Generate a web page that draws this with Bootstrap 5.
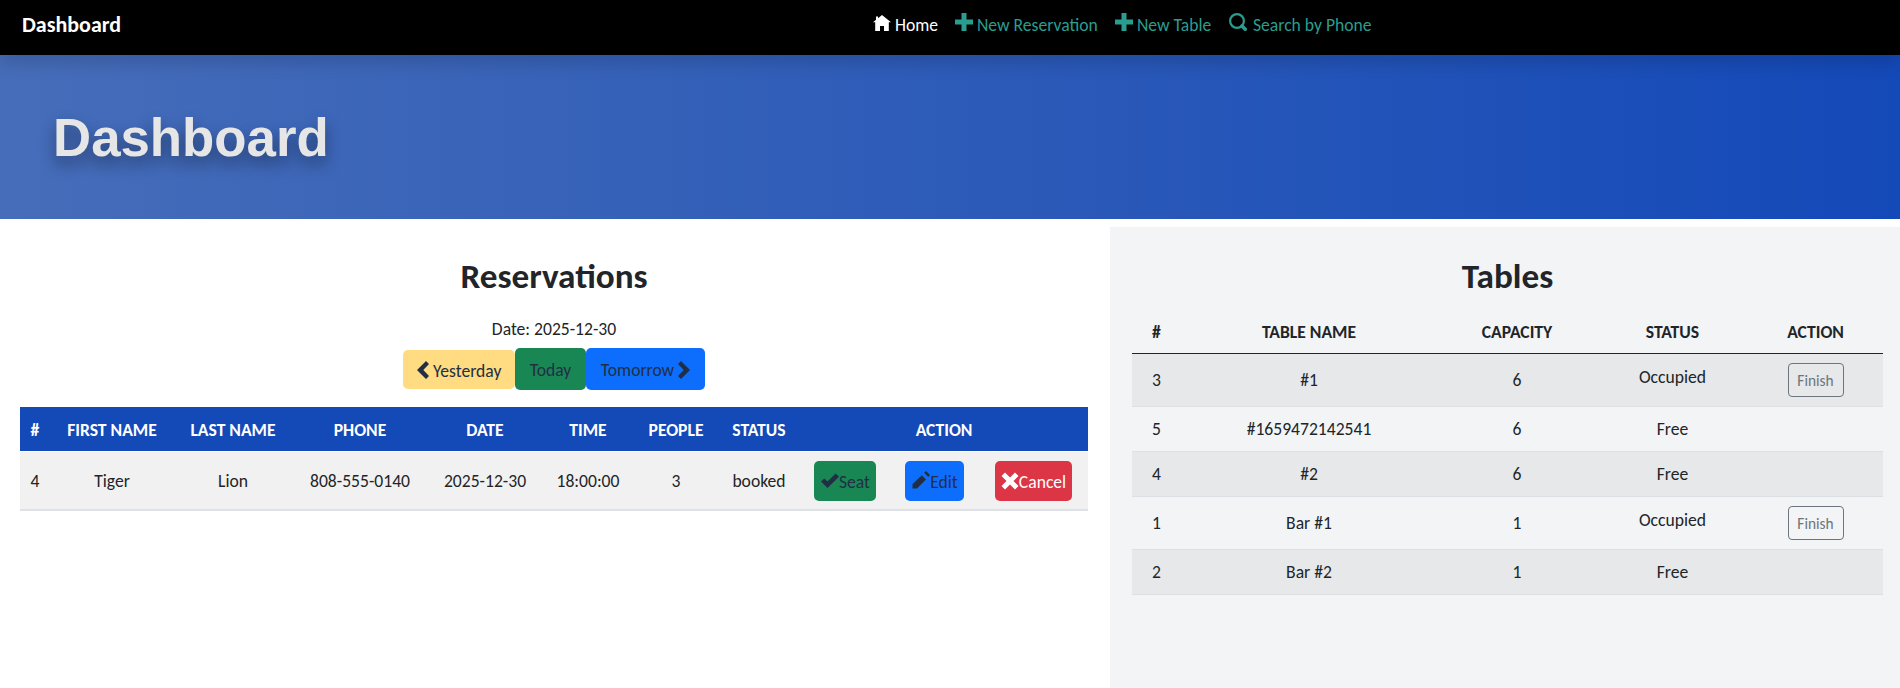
<!DOCTYPE html>
<html lang="en">
<head>
<meta charset="utf-8">
<title>Dashboard</title>
<meta name="viewport" content="width=device-width, initial-scale=1">
<link href="https://cdn.jsdelivr.net/npm/bootstrap@5.3.0/dist/css/bootstrap.min.css" rel="stylesheet">
<style>
body{font-family:Carlito,Lato,sans-serif;font-size:17.6px;line-height:26.4px;color:#212529;background:#fff}
.topbar{height:55px;background:#000;box-shadow:0 .5rem 1rem rgba(0,0,0,.15);padding:12px 0 0 22px;z-index:2}
.topbar a{color:#2a9d8f;text-decoration:none;white-space:nowrap}
.topbar .brand-link{width:851px;color:#fff;font-weight:700;font-size:22px}
.topbar .current{color:#fff}
.topbar .ico{margin-top:1px}
.ico{width:18px;height:18px;fill:currentColor;flex:none}
.hero{height:164px;padding:49px 0 0 53px;background:linear-gradient(to right,#466db9,#1449b8)}
.hero h1{font:700 52.8px/1.3 "Liberation Sans",Arial,sans-serif;color:#e6e6e6;text-shadow:0 8px 16px rgba(0,0,0,.4);margin:0}
.main-area{margin-top:8px;height:461px}
.left-pane{width:1110px;padding:28px 22px 0 20px}
.right-pane{width:790px;background:#f2f4f6;padding:28px 17px 0 22px}
h2{font-size:35.2px;font-weight:700;line-height:42px;margin:0}
.date-line{margin:19px 0 6px}
.day-row{height:42px;margin-bottom:17px}
.btn{--bs-btn-font-size:17.6px;--bs-btn-border-width:0;color:#212f45;border-radius:5px;white-space:nowrap}
.day-btn{padding:0 14px;height:42px;line-height:44px}
.day-btn.yest{height:39px;background:#ffdb81}
.chev{width:12px;height:18px;fill:currentColor;margin-top:-5px}
.act-btn{height:40px;padding:3px 6px 0 7px}
.act-btn.btn-danger{color:#fff;padding-left:6px}
.act-btn .ico{margin-top:-5px}
.act-btn.btn-danger .ico{margin-top:-3px}
.grid-table{table-layout:fixed;text-align:center;margin:0;color:#212529;border-collapse:separate;border-spacing:0}
.grid-table th,.grid-table td{padding:1px 0 0;vertical-align:middle;box-shadow:none!important;border:0}
.grid-table td.act-cell{padding:0}
.res-table thead th{background:#1449b8!important;color:#fff!important;height:44px}
.res-table tbody td{background:#f1f1f1!important;height:60px;border-top:1px solid #fff;border-bottom:2px solid #dee2e6}
.tab-table{margin-top:13px}
.tab-table thead th{background:transparent;border-bottom:1px solid #212529;height:44px}
.tab-table td{background:transparent;border-bottom:1px solid #dcdfe4;height:45px}
.tab-table .tall td{height:53px}
.tab-table tbody tr:nth-child(odd) td{background:#e6e8ea}
.tab-table .tall td.occ{padding-bottom:7px}
.finish{--bs-btn-font-size:15.4px;border:1px solid #6c757d;color:#6c757d;border-radius:4px;width:56px;height:34px;line-height:34px;padding:0}
</style>
</head>
<body>
<svg width="0" height="0" class="position-absolute">
<symbol id="home" viewBox="0 0 18 18"><path d="M9 2 18 9.300H15.800V18H11V13H7V18H2.200V9.300H0L3 6.700V3.500H5V5.200z"/></symbol>
<symbol id="plus" viewBox="0 0 18 18"><path d="M6.500 0h5v6.500H18v5h-6.500V18h-5v-6.500H0v-5h6.500z"/></symbol>
<symbol id="search" viewBox="0 0 18 18"><circle cx="8" cy="8" r="6.900" fill="none" stroke="currentColor" stroke-width="2.200"/><path d="m13 13 3.200 3.200" fill="none" stroke="currentColor" stroke-width="3.600" stroke-linecap="round"/></symbol>
<symbol id="left" viewBox="0 0 12 18"><path d="M9 0 12 3 6.300 9 12 15 9 18 0 9z"/></symbol>
<symbol id="right" viewBox="0 0 12 18"><path d="M3 0 0 3 5.700 9 0 15 3 18 12 9z"/></symbol>
<symbol id="check" viewBox="0 0 18 18"><path d="M14.600 2.500 18 5.700 6.500 17 0 10.600 3.300 7.400 6.500 10.500z"/></symbol>
<symbol id="pencil" viewBox="0 0 18 18"><path d="M9.800 4.200 14 8.400 5 17.500H.5V13.300zM12.200 1.800 14 0 18 4 16.300 6z"/></symbol>
<symbol id="cross" viewBox="0 0 18 18"><path d="M4 .5 9 5.500 14 .5 17.500 4 12.500 9 17.500 14 14 17.500 9 12.500 4 17.500.5 14 5.500 9 .5 4z"/></symbol>
</svg>
<nav class="topbar d-flex position-relative align-items-start">
<a class="brand-link" href="#">Dashboard</a>
<a class="current d-flex" href="#" style="width:82px;gap:4px"><svg class="ico"><use href="#home"/></svg>Home</a>
<a class="d-flex" href="#" style="width:160px;gap:4px"><svg class="ico"><use href="#plus"/></svg>New Reservation</a>
<a class="d-flex" href="#" style="width:114px;gap:4px"><svg class="ico"><use href="#plus"/></svg>New Table</a>
<a class="d-flex" href="#" style="gap:6px"><svg class="ico"><use href="#search"/></svg>Search by Phone</a>
</nav>
<header class="hero"><h1>Dashboard</h1></header>
<main class="main-area d-flex">
<section class="left-pane text-center">
<h2>Reservations</h2>
<p class="date-line">Date: 2025-12-30</p>
<div class="day-row d-flex justify-content-center align-items-center">
<a class="btn day-btn yest" href="#" style="width:112px;line-height:42px"><svg class="chev me-1"><use href="#left"/></svg>Yesterday</a><a class="btn btn-success day-btn" href="#" style="width:71px;color:#212f45">Today</a><a class="btn btn-primary day-btn" href="#" style="width:119px;color:#212f45">Tomorrow<svg class="chev ms-1"><use href="#right"/></svg></a>
</div>
<table class="table grid-table res-table">
<colgroup><col style="width:30px"><col style="width:124px"><col style="width:118px"><col style="width:136px"><col style="width:114px"><col style="width:92px"><col style="width:84px"><col style="width:82px"><col style="width:90px"><col style="width:89px"><col style="width:109px"></colgroup>
<thead><tr><th>#</th><th>FIRST NAME</th><th>LAST NAME</th><th>PHONE</th><th>DATE</th><th>TIME</th><th>PEOPLE</th><th>STATUS</th><th colspan="3">ACTION</th></tr></thead>
<tbody><tr><td>4</td><td>Tiger</td><td>Lion</td><td>808-555-0140</td><td>2025-12-30</td><td>18:00:00</td><td>3</td><td>booked</td>
<td class="act-cell"><a class="btn btn-success act-btn d-inline-flex align-items-center" href="#" style="color:#212f45"><svg class="ico"><use href="#check"/></svg>Seat</a></td>
<td class="act-cell"><a class="btn btn-primary act-btn d-inline-flex align-items-center" href="#" style="color:#212f45"><svg class="ico"><use href="#pencil"/></svg>Edit</a></td>
<td class="act-cell"><a class="btn btn-danger act-btn d-inline-flex align-items-center" href="#"><svg class="ico"><use href="#cross"/></svg>Cancel</a></td></tr></tbody>
</table>
</section>
<section class="right-pane text-center">
<h2>Tables</h2>
<table class="table grid-table tab-table">
<colgroup><col style="width:49px"><col style="width:256px"><col style="width:160px"><col style="width:151px"><col style="width:135px"></colgroup>
<thead><tr><th>#</th><th>TABLE NAME</th><th>CAPACITY</th><th>STATUS</th><th>ACTION</th></tr></thead>
<tbody>
<tr class="tall"><td>3</td><td>#1</td><td>6</td><td class="occ">Occupied</td><td class="act-cell"><button class="btn finish">Finish</button></td></tr>
<tr><td>5</td><td>#1659472142541</td><td>6</td><td>Free</td><td></td></tr>
<tr><td>4</td><td>#2</td><td>6</td><td>Free</td><td></td></tr>
<tr class="tall"><td>1</td><td>Bar #1</td><td>1</td><td class="occ">Occupied</td><td class="act-cell"><button class="btn finish">Finish</button></td></tr>
<tr><td>2</td><td>Bar #2</td><td>1</td><td>Free</td><td></td></tr>
</tbody></table>
</section>
</main>
<script src="https://cdn.jsdelivr.net/npm/bootstrap@5.3.0/dist/js/bootstrap.bundle.min.js"></script>
</body>
</html>
